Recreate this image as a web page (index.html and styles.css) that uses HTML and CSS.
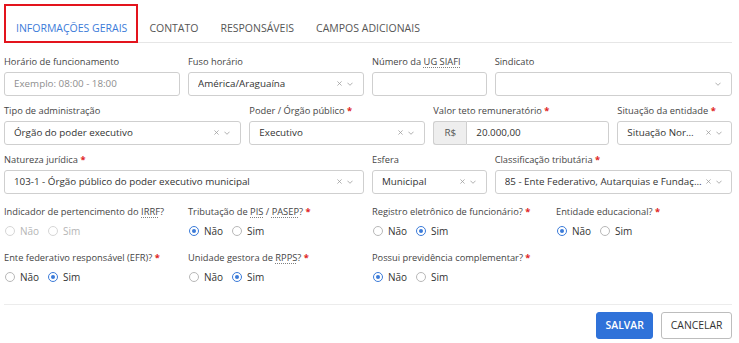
FILE: index.html
```html
<!DOCTYPE html>
<html lang="pt-BR">
<head>
<meta charset="utf-8">
<title>Informações gerais</title>
<link rel="stylesheet" href="styles.css">
</head>
<body>
<div class="page">
  <nav class="tabs">
    <div class="tab active">INFORMAÇÕES GERAIS</div>
    <div class="tab">CONTATO</div>
    <div class="tab">RESPONSÁVEIS</div>
    <div class="tab">CAMPOS ADICIONAIS</div>
  </nav>

  <div class="grid fields">
    <div class="field s3">
      <div class="lbl">Horário de funcionamento</div>
      <div class="ctrl"><span class="val ph">Exemplo: 08:00 - 18:00</span></div>
    </div>
    <div class="field s3">
      <div class="lbl">Fuso horário</div>
      <div class="ctrl"><span class="val">América/Araguaína</span><span class="icons"><svg class="x" viewBox="0 0 6 6"><path d="M0.5 0.5L5.5 5.5M5.5 0.5L0.5 5.5"/></svg><svg class="chev" viewBox="0 0 7 4"><path d="M0.5 0.5L3.5 3.5L6.5 0.5"/></svg></span></div>
    </div>
    <div class="field s2">
      <div class="lbl">Número da <abbr>UG SIAFI</abbr></div>
      <div class="ctrl"><span class="val"></span></div>
    </div>
    <div class="field s4">
      <div class="lbl">Sindicato</div>
      <div class="ctrl"><span class="val"></span><span class="icons"><svg class="chev" viewBox="0 0 7 4"><path d="M0.5 0.5L3.5 3.5L6.5 0.5"/></svg></span></div>
    </div>

    <div class="field s4">
      <div class="lbl">Tipo de administração</div>
      <div class="ctrl"><span class="val">Órgão do poder executivo</span><span class="icons"><svg class="x" viewBox="0 0 6 6"><path d="M0.5 0.5L5.5 5.5M5.5 0.5L0.5 5.5"/></svg><svg class="chev" viewBox="0 0 7 4"><path d="M0.5 0.5L3.5 3.5L6.5 0.5"/></svg></span></div>
    </div>
    <div class="field s3">
      <div class="lbl">Poder / Órgão público <span class="req">*</span></div>
      <div class="ctrl"><span class="val">Executivo</span><span class="icons"><svg class="x" viewBox="0 0 6 6"><path d="M0.5 0.5L5.5 5.5M5.5 0.5L0.5 5.5"/></svg><svg class="chev" viewBox="0 0 7 4"><path d="M0.5 0.5L3.5 3.5L6.5 0.5"/></svg></span></div>
    </div>
    <div class="field s3">
      <div class="lbl">Valor teto remuneratório <span class="req">*</span></div>
      <div class="group">
        <span class="addon">R$</span>
        <div class="ctrl joined"><span class="val">20.000,00</span></div>
      </div>
    </div>
    <div class="field s2">
      <div class="lbl">Situação da entidade <span class="req">*</span></div>
      <div class="ctrl tight"><span class="val">Situação Normal</span><span class="icons"><svg class="x" viewBox="0 0 6 6"><path d="M0.5 0.5L5.5 5.5M5.5 0.5L0.5 5.5"/></svg><svg class="chev" viewBox="0 0 7 4"><path d="M0.5 0.5L3.5 3.5L6.5 0.5"/></svg></span></div>
    </div>

    <div class="field s6">
      <div class="lbl">Natureza jurídica <span class="req">*</span></div>
      <div class="ctrl"><span class="val">103-1 - Órgão público do poder executivo municipal</span><span class="icons"><svg class="x" viewBox="0 0 6 6"><path d="M0.5 0.5L5.5 5.5M5.5 0.5L0.5 5.5"/></svg><svg class="chev" viewBox="0 0 7 4"><path d="M0.5 0.5L3.5 3.5L6.5 0.5"/></svg></span></div>
    </div>
    <div class="field s2">
      <div class="lbl">Esfera</div>
      <div class="ctrl"><span class="val">Municipal</span><span class="icons"><svg class="x" viewBox="0 0 6 6"><path d="M0.5 0.5L5.5 5.5M5.5 0.5L0.5 5.5"/></svg><svg class="chev" viewBox="0 0 7 4"><path d="M0.5 0.5L3.5 3.5L6.5 0.5"/></svg></span></div>
    </div>
    <div class="field s4">
      <div class="lbl">Classificação tributária <span class="req">*</span></div>
      <div class="ctrl tight"><span class="val">85 - Ente Federativo, Autarquias e Fundações Públicas</span><span class="icons"><svg class="x" viewBox="0 0 6 6"><path d="M0.5 0.5L5.5 5.5M5.5 0.5L0.5 5.5"/></svg><svg class="chev" viewBox="0 0 7 4"><path d="M0.5 0.5L3.5 3.5L6.5 0.5"/></svg></span></div>
    </div>
  </div>

  <div class="grid radios">
    <div class="rfield s3">
      <div class="lbl">Indicador de pertencimento do <abbr>IRRF</abbr>?</div>
      <div class="opts disabled">
        <span class="opt"><span class="radio"></span>Não</span>
        <span class="opt"><span class="radio"></span>Sim</span>
      </div>
    </div>
    <div class="rfield s3">
      <div class="lbl">Tributação de <abbr>PIS</abbr> / <abbr>PASEP</abbr>? <span class="req">*</span></div>
      <div class="opts">
        <span class="opt"><span class="radio on"></span>Não</span>
        <span class="opt"><span class="radio"></span>Sim</span>
      </div>
    </div>
    <div class="rfield s3">
      <div class="lbl">Registro eletrônico de funcionário? <span class="req">*</span></div>
      <div class="opts">
        <span class="opt"><span class="radio"></span>Não</span>
        <span class="opt"><span class="radio on"></span>Sim</span>
      </div>
    </div>
    <div class="rfield s3">
      <div class="lbl">Entidade educacional? <span class="req">*</span></div>
      <div class="opts">
        <span class="opt"><span class="radio on"></span>Não</span>
        <span class="opt"><span class="radio"></span>Sim</span>
      </div>
    </div>

    <div class="rfield s3">
      <div class="lbl">Ente federativo responsável (EFR)? <span class="req">*</span></div>
      <div class="opts">
        <span class="opt"><span class="radio"></span>Não</span>
        <span class="opt"><span class="radio on"></span>Sim</span>
      </div>
    </div>
    <div class="rfield s3">
      <div class="lbl">Unidade gestora de <abbr>RPPS</abbr>? <span class="req">*</span></div>
      <div class="opts">
        <span class="opt"><span class="radio"></span>Não</span>
        <span class="opt"><span class="radio on"></span>Sim</span>
      </div>
    </div>
    <div class="rfield s3">
      <div class="lbl">Possui previdência complementar? <span class="req">*</span></div>
      <div class="opts">
        <span class="opt"><span class="radio on"></span>Não</span>
        <span class="opt"><span class="radio"></span>Sim</span>
      </div>
    </div>
  </div>

  <div class="footer">
    <button class="btn primary" type="button">SALVAR</button>
    <button class="btn" type="button">CANCELAR</button>
  </div>
</div>
</body>
</html>
```

FILE: styles.css
```css
* { box-sizing: border-box; }

html, body {
  margin: 0;
  padding: 0;
  background: #ffffff;
}

body {
  font-family: "Open Sans", "Noto Sans", "Liberation Sans", sans-serif;
  color: #333333;
}

.page {
  width: 739px;
  padding: 4px 7px 0 4px;
}

/* Tabs */
.tabs {
  display: flex;
  height: 39px;
  border-bottom: 1px solid #e6e6e6;
}

.tab {
  height: 38px;
  padding: 15px 9px 0 9px;
  border: 2px solid transparent;
  font-size: 10.5px;
  line-height: 14px;
  color: #555555;
  white-space: nowrap;
}

.tab.active {
  height: 39px;
  margin-bottom: -1px;
  padding-left: 10px;
  border-color: #e3141d;
  color: #3b7bd9;
}

/* Grid */
.grid {
  display: grid;
  grid-template-columns: repeat(12, 1fr);
  column-gap: 8px;
}

.s2 { grid-column: span 2; }
.s3 { grid-column: span 3; }
.s4 { grid-column: span 4; }
.s6 { grid-column: span 6; }

.fields {
  margin-top: 12px;
}

.field {
  min-width: 0;
  margin-bottom: 8.5px;
}

.lbl {
  font-size: 9.3px;
  line-height: 13px;
  height: 13px;
  color: #454545;
  white-space: nowrap;
  margin-bottom: 3.5px;
}

.req {
  color: #e02424;
  font-weight: 700;
}

abbr {
  text-decoration: underline dotted #808080;
  text-underline-offset: 2px;
}

.ctrl {
  display: flex;
  align-items: center;
  height: 24px;
  padding: 0 10px 0 9px;
  border: 1px solid #cfcfcf;
  border-radius: 3px;
  background: #ffffff;
  font-size: 9.8px;
  color: #333333;
}

.ctrl.tight {
  padding-right: 9px;
}

.ctrl.tight .icons {
  margin-left: 4px;
}

.val {
  flex: 1;
  min-width: 0;
  overflow: hidden;
  white-space: nowrap;
  text-overflow: ellipsis;
}

.ph {
  color: #8e8e8e;
}

.icons {
  display: flex;
  align-items: center;
  gap: 5px;
  margin-left: 3px;
}

.icons svg {
  fill: none;
  stroke: #9a9a9a;
  stroke-width: 0.9;
}

.x {
  width: 5px;
  height: 5px;
}

.chev {
  width: 6px;
  height: 4px;
}

.group {
  display: flex;
  height: 24px;
}

.addon {
  width: 33px;
  flex: none;
  display: flex;
  align-items: center;
  justify-content: center;
  background: #eeeeee;
  border: 1px solid #cfcfcf;
  border-right: 0;
  border-radius: 3px 0 0 3px;
  font-size: 9.8px;
  color: #555555;
}

.ctrl.joined {
  flex: 1;
  min-width: 0;
  border-radius: 0 3px 3px 0;
}

/* Radios */
.radios {
  margin-top: 2.5px;
}

.rfield {
  min-width: 0;
  margin-bottom: 10.5px;
}

.rfield .lbl {
  margin-bottom: 3px;
}

.opts {
  display: flex;
  align-items: center;
  height: 20px;
  gap: 8px;
  font-size: 10px;
  color: #333333;
}

.opt {
  display: flex;
  align-items: center;
  gap: 5px;
  padding-left: 1px;
}

.radio {
  width: 10px;
  height: 10px;
  border: 1px solid #b8b8b8;
  border-radius: 50%;
  background: #ffffff;
  display: flex;
  align-items: center;
  justify-content: center;
}

.radio.on {
  border-color: #3b7bd9;
}

.radio.on::after {
  content: "";
  width: 4px;
  height: 4px;
  border-radius: 50%;
  background: #3b7bd9;
}

.opts.disabled {
  color: #b5b5b5;
}

.opts.disabled .radio {
  border-color: #d6d6d6;
}

/* Footer */
.footer {
  display: flex;
  justify-content: flex-end;
  gap: 8px;
  border-top: 1px solid #ececec;
  margin-top: 6px;
  padding-top: 7px;
}

.btn {
  height: 27px;
  padding: 0 8.5px;
  border: 1px solid #bdbdbd;
  border-radius: 3px;
  background: #ffffff;
  font-family: "Open Sans", "Noto Sans", "Liberation Sans", sans-serif;
  font-size: 10.4px;
  color: #333333;
}

.btn.primary {
  background: #2f72d9;
  border-color: #2f72d9;
  color: #ffffff;
  font-weight: 600;
}
```
